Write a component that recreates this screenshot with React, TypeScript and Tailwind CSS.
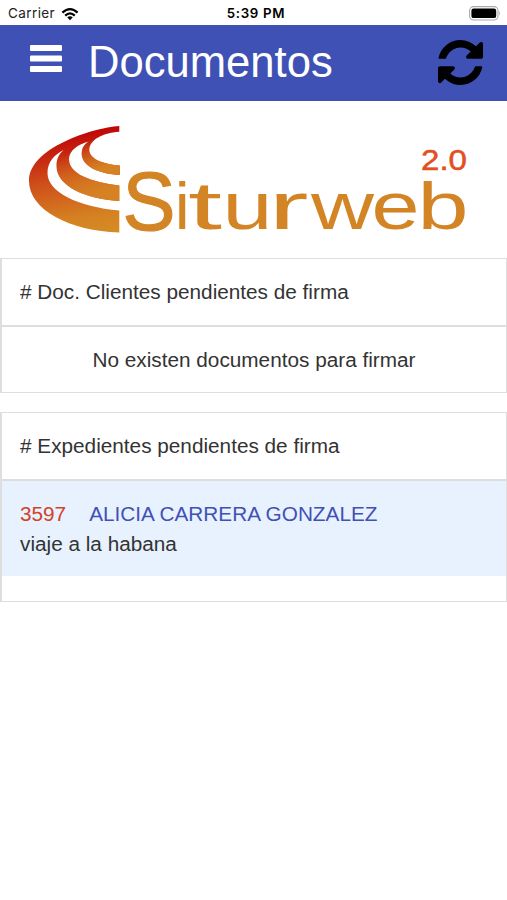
import type { ReactNode } from 'react';

function StatusBar() {
  return (
    <div className="grid h-[25px] grid-cols-3 items-center pt-[3px] font-[Inter,sans-serif] text-[13.5px] leading-none text-[#222]">
      <div className="flex items-center gap-[6px] pl-2">
        <span className="tracking-[0.4px]">Carrier</span>
        <svg width="18" height="14" viewBox="0 0 18 14" fill="none" stroke="#000" strokeWidth="2.3">
          <path d="M1.4 5.6 Q9 -1.4 16.6 5.6" />
          <path d="M4.2 8.6 Q9 4.2 13.8 8.6" />
          <path d="M6.2 10.3 Q9 8.1 11.8 10.3 L9 13.2Z" fill="#000" stroke="none" />
        </svg>
      </div>
      <span className="pl-[5px] text-center text-[13.3px] font-semibold tracking-[0.7px] text-black">5:39 PM</span>
      <div className="flex justify-end pr-[6px] pb-[2px]">
        <svg width="32" height="15" viewBox="0 0 32 15">
          <rect x="0.6" y="0.6" width="28.4" height="13.4" rx="4" fill="#fff" stroke="#aaa" strokeWidth="1.1" />
          <rect x="2.4" y="2.5" width="24.8" height="9.6" rx="2.2" fill="#000" />
          <path d="M30.2 5 Q32 7.3 30.2 9.6Z" fill="#999" />
        </svg>
      </div>
    </div>
  );
}

function Header() {
  return (
    <header className="flex h-[76px] items-center bg-[#3f51b5] pr-6 pl-[30px]">
      <button aria-label="Menú" className="-mt-[9px]">
        <svg width="32" height="27" viewBox="0 0 32 27" fill="#fff">
          <rect width="32" height="6" rx="1" />
          <rect y="10.6" width="32" height="6" rx="1" />
          <rect y="21" width="32" height="6" rx="1" />
        </svg>
      </button>
      <h1 className="ml-[26px] flex-1 text-[43.6px] leading-none text-white">Documentos</h1>
      <button aria-label="Actualizar" className="-mt-[2px]">
        <svg width="45" height="45" viewBox="0 0 1536 1536" fill="#000">
          <path d="M1511 928q0 5-1 7-64 268-268 434.500t-478 166.500q-146 0-282.500-55t-243.500-157l-129 129q-19 19-45 19t-45-19-19-45v-448q0-26 19-45t45-19h448q26 0 45 19t19 45-19 45l-137 137q71 66 161 102t187 36q134 0 250-65t186-179q11-17 53-117 8-23 30-23h192q13 0 22.500 9.500t9.500 22.500zM1536 128v448q0 26-19 45t-45 19h-448q-26 0-45-19t-19-45 19-45l138-138q-148-137-349-137-134 0-250 65t-186 179q-11 17-53 117-8 23-30 23h-199q-13 0-22.500-9.500t-9.500-22.500v-7q65-268 270-434.500t480-166.500q146 0 284 55.500t245 156.500l130-129q19-19 45-19t45 19 19 45z" />
        </svg>
      </button>
    </header>
  );
}

// x and advance of each wordmark glyph after the S
const letters = [
  { char: 'i', x: 174.8, width: 15 },
  { char: 't', x: 188, width: 34 },
  { char: 'u', x: 222.5, width: 50 },
  { char: 'r', x: 268.5, width: 40 },
  { char: 'w', x: 311, width: 63 },
  { char: 'e', x: 371.6, width: 48 },
  { char: 'b', x: 417.6, width: 51 },
];

function Logo() {
  return (
    <svg className="block" width="507" height="157" viewBox="0 101 507 157" aria-label="Siturweb 2.0">
      <defs>
        <linearGradient id="swirl" gradientUnits="userSpaceOnUse" x1="80" y1="128" x2="95" y2="232">
          <stop offset="0.05" stopColor="#c00808" />
          <stop offset="0.5" stopColor="#cf521b" />
          <stop offset="0.85" stopColor="#d58222" />
          <stop offset="1" stopColor="#d58a23" />
        </linearGradient>
        <linearGradient id="middle" gradientUnits="userSpaceOnUse" x1="72" y1="150" x2="88" y2="198">
          <stop offset="0" stopColor="#d58222" stopOpacity="0" />
          <stop offset="1" stopColor="#d58222" />
        </linearGradient>
        <linearGradient id="inner" gradientUnits="userSpaceOnUse" x1="88" y1="139" x2="98" y2="170">
          <stop offset="0" stopColor="#d58222" stopOpacity="0" />
          <stop offset="1" stopColor="#d58222" />
        </linearGradient>
      </defs>
      {/* Swirl */}
      <path
        d="M119.300 126 C92 128 29 148 29 181 C29 210 70 231 119.300 232.500 V210.500 C78 207 47.500 192 47.500 173 C47.500 162 54 155 63.500 150 C58 155 56.500 160 56.500 166 C56.500 186 85 199 119.300 201 V185.500 C91 182 69 174 69 159 C69 151 78 144 88.700 141.500 C83 145 81.700 149 81.700 154 C81.700 166 99 174 119.800 175 V165.500 C101 164 89.300 158 89.300 150 C89.300 140 102 133 119.300 131.700Z"
        fill="url(#swirl)"
      />
      <path
        d="M63.500 150 C58 155 56.500 160 56.500 166 C56.500 186 85 199 119.300 201 V185.500 C91 182 69 174 69 159 C69 155 71 152 74 149Z"
        fill="url(#middle)"
      />
      <path
        d="M88.700 141.500 C83 145 81.700 149 81.700 154 C81.700 166 99 174 119.800 175 V165.500 C101 164 89.300 158 89.300 150 C89.300 146 91 143 94 140Z"
        fill="url(#inner)"
      />
      {/* Wordmark */}
      <text y="228.500" fontSize="66" fill="#d38425" stroke="#d38425" strokeWidth="0" fontFamily="'Liberation Sans', sans-serif">
        <tspan x="122.500" y="229.500" fontSize="83" textLength="53" lengthAdjust="spacingAndGlyphs" strokeWidth="1.2">S</tspan>
        {letters.map(({ char, x, width }) => (
          <tspan key={char} x={x} y="228.500" textLength={width} lengthAdjust="spacingAndGlyphs">{char}</tspan>
        ))}
      </text>
      <text x="421" y="169.500" fill="#e2501f" stroke="#e2501f" strokeWidth="0.5" fontSize="29.500" textLength="46" lengthAdjust="spacingAndGlyphs" fontFamily="'Liberation Sans', sans-serif">
        2.0
      </text>
    </svg>
  );
}

function Panel({ title, children }: { title: string; children: ReactNode }) {
  return (
    <section className="border border-l-2 border-[#dedede] text-[20.75px]">
      <h2 className="flex h-[68px] items-center border-b-2 border-[#dedede] pb-[1px] pl-[18px]">{title}</h2>
      {children}
    </section>
  );
}

export default function App() {
  return (
    <div className="min-h-[900px] w-full bg-white font-['Liberation_Sans',Arial,sans-serif] text-[#333]">
      <StatusBar />
      <Header />
      <Logo />
      <main className="flex flex-col gap-[19px]">
        <Panel title="# Doc. Clientes pendientes de firma">
          <p className="flex h-[65px] items-center justify-center pt-[1px]">No existen documentos para firmar</p>
        </Panel>
        <Panel title="# Expedientes pendientes de firma">
          <div className="mb-[25px] h-[95px] bg-[#e8f2fe] pt-[18px] pl-[18px] leading-[30px]">
            <div className="flex gap-[23px]">
              <span className="text-[#d0432a]">3597</span>
              <span className="text-[#3f51b5]">ALICIA CARRERA GONZALEZ</span>
            </div>
            <p>viaje a la habana</p>
          </div>
        </Panel>
      </main>
    </div>
  );
}
